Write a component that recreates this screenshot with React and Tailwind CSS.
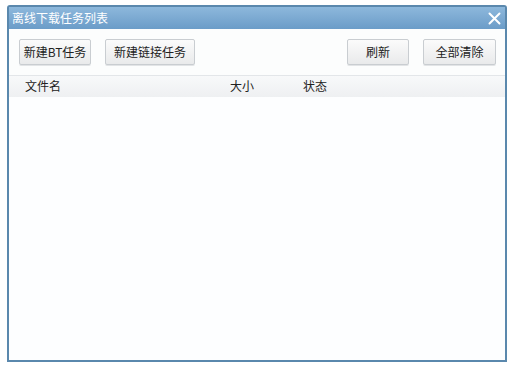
export default function App() {
  const font = { fontFamily: '"Noto Sans CJK SC", "Noto Sans", sans-serif' };
  const btn =
    "h-[26px] flex items-center justify-center rounded-[2px] border border-[#c9cdd1] bg-gradient-to-b from-[#fbfbfb] to-[#e9eaeb] text-[12px] text-[#222] shadow-[0_1px_0_#e2e4e6]";
  return (
    <div className="w-[522px] h-[366px] bg-white pt-[5px] pl-[7px]" style={font}>
      <div className="w-[500px] h-[357px] flex flex-col border-2 border-[#5a88ad] rounded-t-[3px] bg-[#fdfdfe]">
        <div className="h-[22px] flex items-center justify-between bg-gradient-to-b from-[#8db8dc] to-[#6b9cc8] pl-[3px] pr-[4px]">
          <span className="text-[12px] text-white leading-none">离线下载任务列表</span>
          <svg width="13" height="13" viewBox="0 0 13 13">
            <path d="M1.5 1.5 L11.5 11.5 M11.5 1.5 L1.5 11.5" stroke="#ffffff" strokeWidth="2" strokeLinecap="round" />
          </svg>
        </div>
        <div className="h-[46px] flex items-center pl-[10px] pr-[9px] bg-[#fcfdfd]">
          <div className={btn + " w-[72px]"}>新建BT任务</div>
          <div className={btn + " w-[90px] ml-[14px]"}>新建链接任务</div>
          <div className="flex-1" />
          <div className={btn + " w-[62px]"}>刷新</div>
          <div className={btn + " w-[73px] ml-[14px]"}>全部清除</div>
        </div>
        <div className="h-[22px] flex items-center pb-[2px] border-t border-[#e3e6e9] bg-gradient-to-b from-[#f8f9fa] to-[#eef0f2] text-[12px] text-[#222]">
          <span className="ml-[16px] w-[205px]">文件名</span>
          <span className="w-[73px]">大小</span>
          <span>状态</span>
        </div>
        <div className="flex-1 bg-[#fdfeff]" />
      </div>
    </div>
  );
}
